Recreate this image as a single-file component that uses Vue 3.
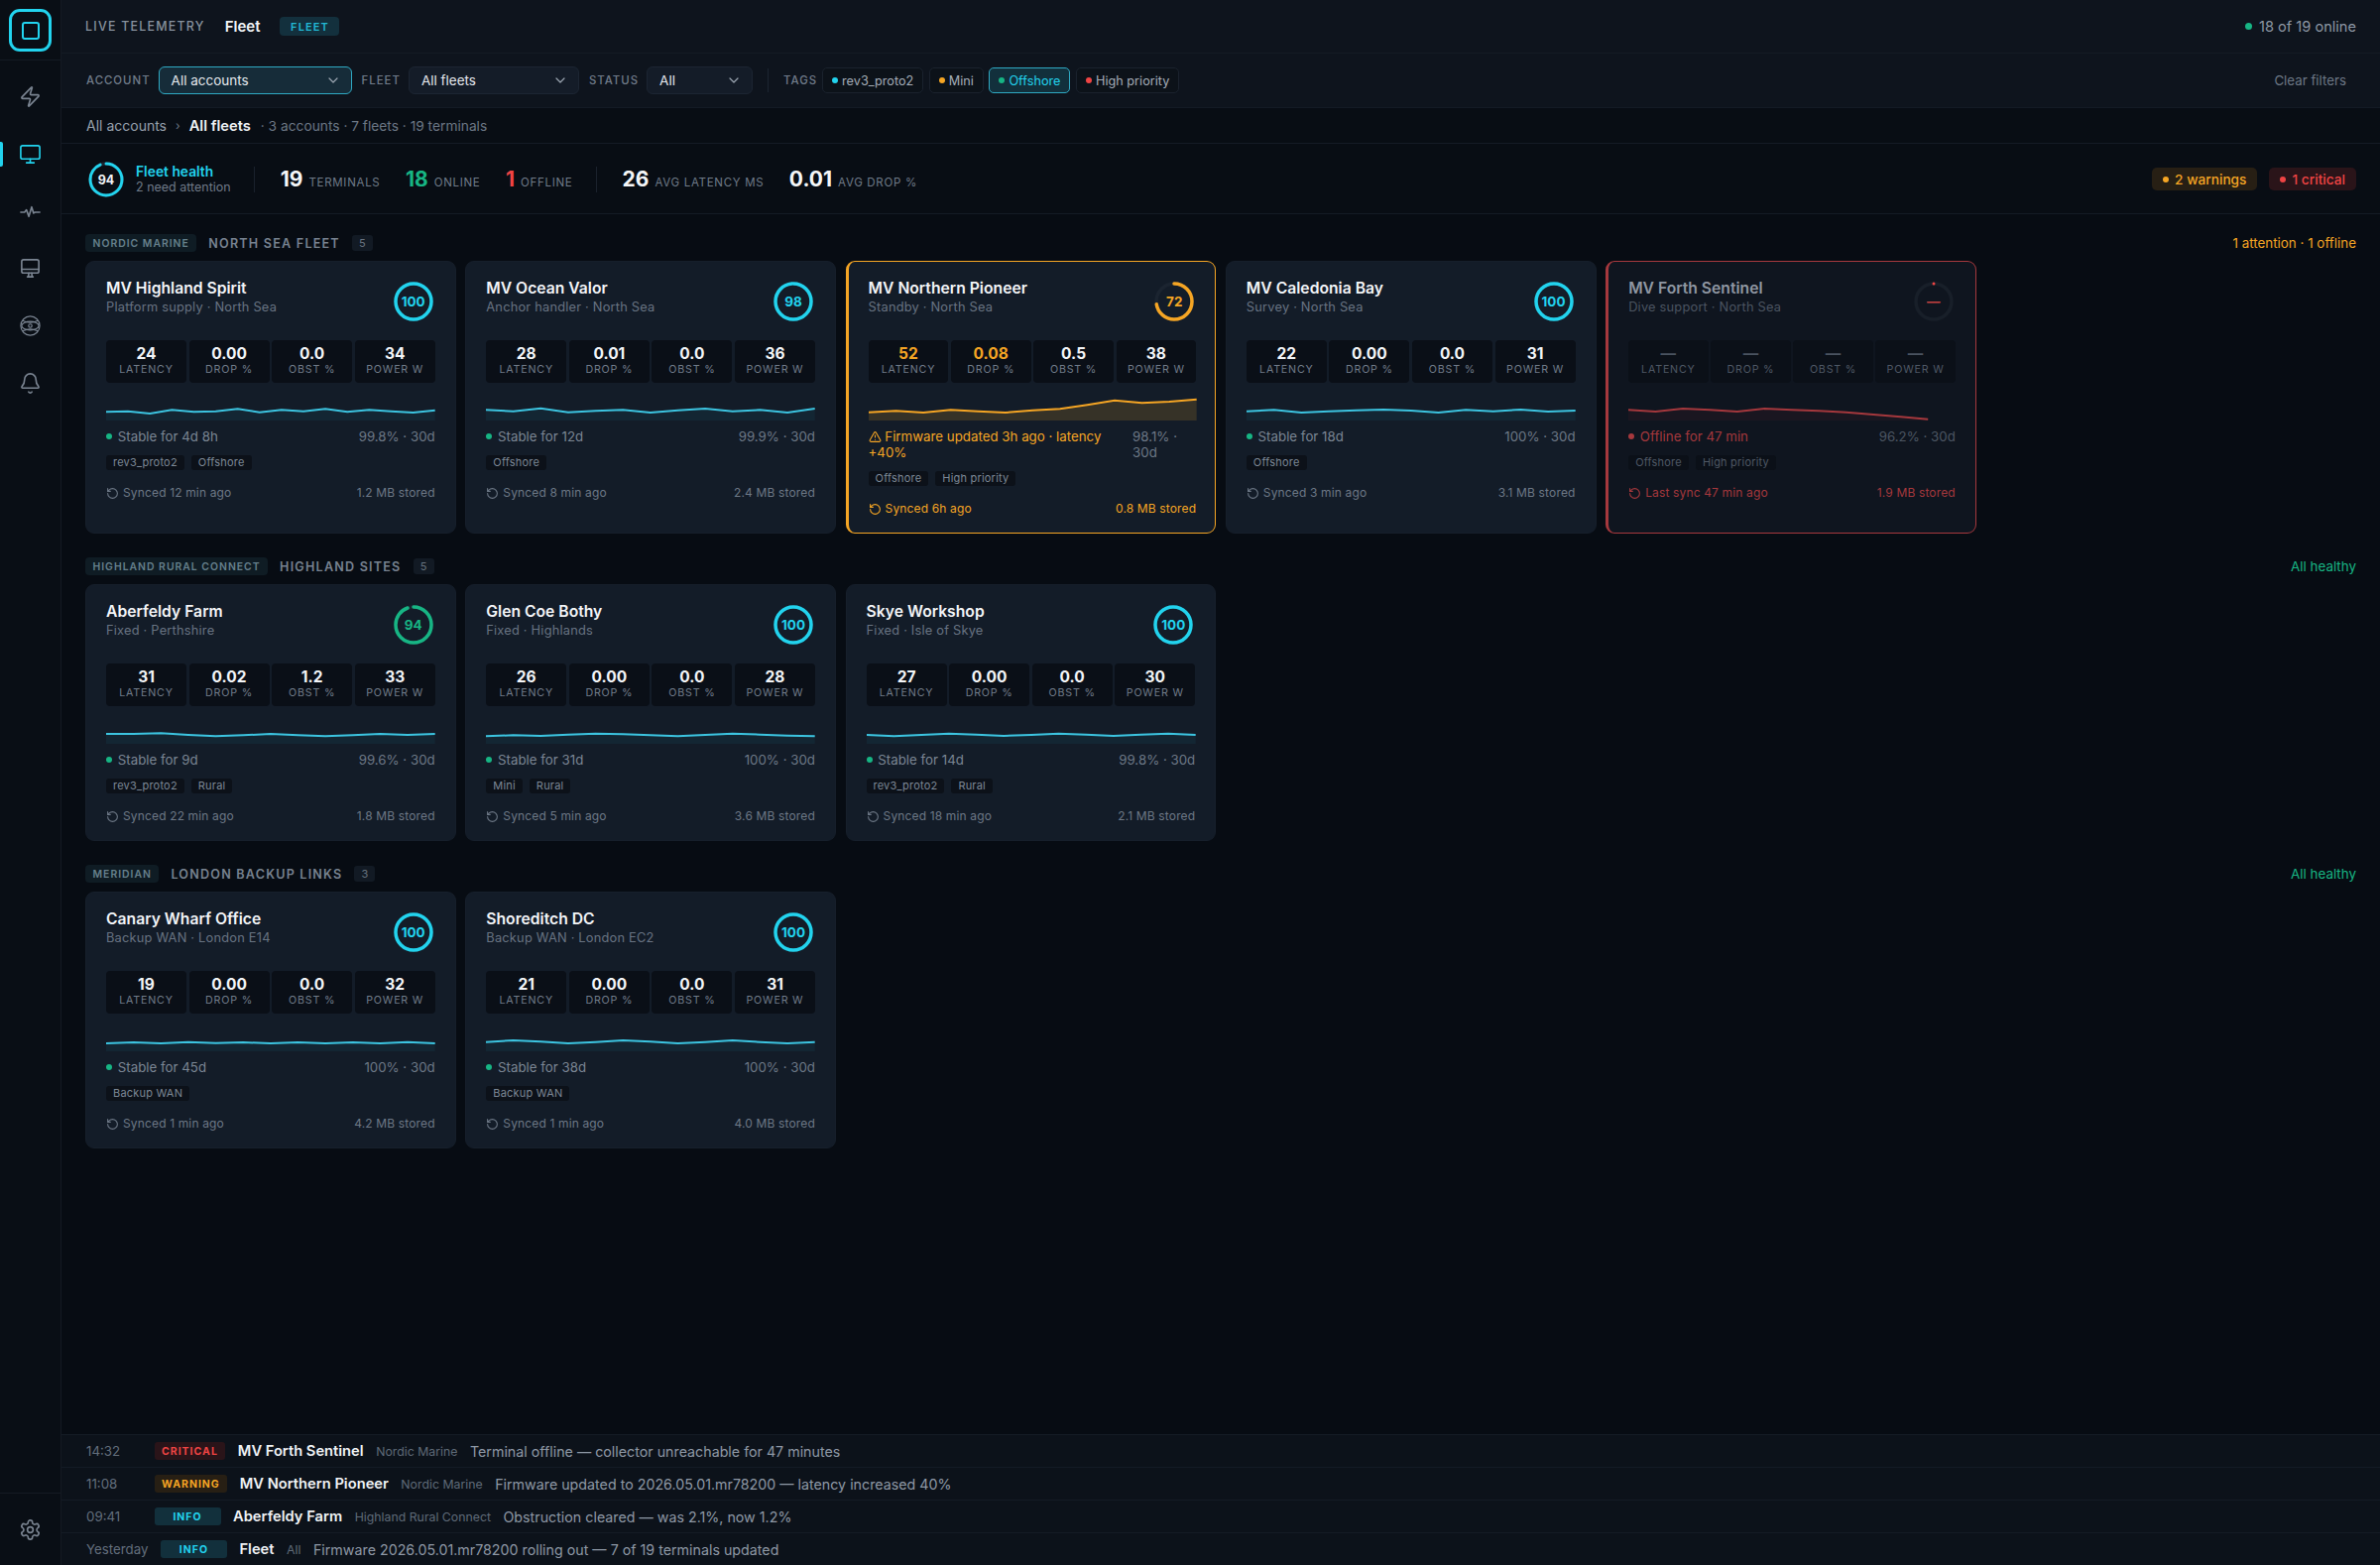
<script setup>
const sections = [
  { org: 'NORDIC MARINE', name: 'NORTH SEA FLEET', count: 5, note: '1 attention · 1 offline', noteCls: 'amber', cards: [
    { t: 'MV Highland Spirit', s: 'Platform supply · North Sea', score: 100, m: ['24', '0.00', '0.0', '34'], st: 'Stable for 4d 8h', up: '99.8% · 30d', tags: ['rev3_proto2', 'Offshore'], sync: 'Synced 12 min ago', mb: '1.2 MB stored', pts: [17.3,16.7,19,15.3,17.3,16.7,14.3,17.7,15.3,16.7,14.3,17.3,15.3,16.7,18,15.7] },
    { t: 'MV Ocean Valor', s: 'Anchor handler · North Sea', score: 98, m: ['28', '0.01', '0.0', '36'], st: 'Stable for 12d', up: '99.9% · 30d', tags: ['Offshore'], sync: 'Synced 8 min ago', mb: '2.4 MB stored', pts: [15.3,16.7,13.7,17.7,16.3,15.3,18,15.7,14,16.7,15.3,18,14] },
    { t: 'MV Northern Pioneer', s: 'Standby · North Sea', score: 72, kind: 'warn', hot: [0, 1], m: ['52', '0.08', '0.5', '38'], st: 'Firmware updated 3h ago · latency +40%', up: '98.1% · 30d', tags: ['Offshore', 'High priority'], sync: 'Synced 6h ago', mb: '0.8 MB stored', pts: [17.7,16.3,18,15.3,16.7,18,15.7,14.3,10.3,5.7,8.3,7,4.7] },
    { t: 'MV Caledonia Bay', s: 'Survey · North Sea', score: 100, m: ['22', '0.00', '0.0', '31'], st: 'Stable for 18d', up: '100% · 30d', tags: ['Offshore'], sync: 'Synced 3 min ago', mb: '3.1 MB stored', pts: [16.7,15.3,18,16.7,15.7,15,16,18,15.3,16.7,15,17,16] },
    { t: 'MV Forth Sentinel', s: 'Dive support · North Sea', score: 0, kind: 'off', m: ['—', '—', '—', '—'], st: 'Offline for 47 min', up: '96.2% · 30d', tags: ['Offshore', 'High priority'], sync: 'Last sync 47 min ago', mb: '1.9 MB stored', pts: [15.3,17,14,15.3,17,14,15.3,16.3,17.7,20,22.3,24.7], partial: 11 / 12 },
  ] },
  { org: 'HIGHLAND RURAL CONNECT', name: 'HIGHLAND SITES', count: 5, note: 'All healthy', noteCls: 'green', cards: [
    { t: 'Aberfeldy Farm', s: 'Fixed · Perthshire', score: 94, ringCls: 'green', m: ['31', '0.02', '1.2', '33'], st: 'Stable for 9d', up: '99.6% · 30d', tags: ['rev3_proto2', 'Rural'], sync: 'Synced 22 min ago', mb: '1.8 MB stored', pts: [16,16,15.3,17,18.3,17.3,16,17.3,18.3,17.3,16,17,16] },
    { t: 'Glen Coe Bothy', s: 'Fixed · Highlands', score: 100, m: ['26', '0.00', '0.0', '28'], st: 'Stable for 31d', up: '100% · 30d', tags: ['Mini', 'Rural'], sync: 'Synced 5 min ago', mb: '3.6 MB stored', pts: [18.3,17.3,18,16.7,15.7,16.3,17.3,18.3,17,15.7,16.7,17.7,18.3] },
    { t: 'Skye Workshop', s: 'Fixed · Isle of Skye', score: 100, m: ['27', '0.00', '0.0', '30'], st: 'Stable for 14d', up: '99.8% · 30d', tags: ['rev3_proto2', 'Rural'], sync: 'Synced 18 min ago', mb: '2.1 MB stored', pts: [17,18.3,17,15.7,16.7,18,17,15.7,16.7,18,16.7,15.7,17] },
  ] },
  { org: 'MERIDIAN', name: 'LONDON BACKUP LINKS', count: 3, note: 'All healthy', noteCls: 'green', cards: [
    { t: 'Canary Wharf Office', s: 'Backup WAN · London E14', score: 100, m: ['19', '0.00', '0.0', '32'], st: 'Stable for 45d', up: '100% · 30d', tags: ['Backup WAN'], sync: 'Synced 1 min ago', mb: '4.2 MB stored', pts: [18,17,18,16.7,17.7,17,18,17,18,17,18,16.7,18] },
    { t: 'Shoreditch DC', s: 'Backup WAN · London EC2', score: 100, m: ['21', '0.00', '0.0', '31'], st: 'Stable for 38d', up: '100% · 30d', tags: ['Backup WAN'], sync: 'Synced 1 min ago', mb: '4.0 MB stored', pts: [16.7,15,16.3,18,16.7,15,16.3,18,16.7,15,16.7,18,16.7] },
  ] },
]
const labels = ['LATENCY', 'DROP %', 'OBST %', 'POWER W']
const chips = [
  { l: 'rev3_proto2', c: 'cyan' }, { l: 'Mini', c: 'amber' }, { l: 'Offshore', c: 'green', on: true }, { l: 'High priority', c: 'red' },
]
const events = [
  { time: '14:32', lvl: 'CRITICAL', cls: 'crit', who: 'MV Forth Sentinel', org: 'Nordic Marine', msg: 'Terminal offline — collector unreachable for 47 minutes' },
  { time: '11:08', lvl: 'WARNING', cls: 'warn', who: 'MV Northern Pioneer', org: 'Nordic Marine', msg: 'Firmware updated to 2026.05.01.mr78200 — latency increased 40%' },
  { time: '09:41', lvl: 'INFO', cls: 'info', who: 'Aberfeldy Farm', org: 'Highland Rural Connect', msg: 'Obstruction cleared — was 2.1%, now 1.2%' },
  { time: 'Yesterday', lvl: 'INFO', cls: 'info', who: 'Fleet', org: 'All', msg: 'Firmware 2026.05.01.mr78200 rolling out — 7 of 19 terminals updated' },
]
const stepX = (c, i) => {
  const n = c.pts.length - 1
  return (i / n) * 100 * (c.partial || 1)
}
const line = (c) => c.pts.map((y, i) => `${stepX(c, i).toFixed(2)},${y}`).join(' ')
const area = (c) => `0,26 ${line(c)} ${(100 * (c.partial || 1)).toFixed(2)},26`
const CIRC = 2 * Math.PI * 18
const dash = (score) => `${(score / 100) * CIRC} ${CIRC}`
const ringClass = (c) => c.kind === 'warn' ? 'amber' : c.kind === 'off' ? 'red' : c.ringCls || 'cyan'
</script>

<template>
  <div class="app">
    <aside class="side">
      <div class="logo-cell"><div class="logo"><i class="logo-in"></i></div></div>
      <nav class="nav">
        <a class="nav-i"><svg viewBox="0 0 24 24"><path d="M4 14a1 1 0 0 1-.78-1.63l9.9-10.2a.5.5 0 0 1 .86.46l-1.92 6.02A1 1 0 0 0 13 10h7a1 1 0 0 1 .78 1.63l-9.9 10.2a.5.5 0 0 1-.86-.46l1.92-6.02A1 1 0 0 0 11 14z"/></svg></a>
        <a class="nav-i on"><svg viewBox="0 0 24 24"><rect x="2" y="3" width="20" height="14" rx="2"/><path d="M8 21h8M12 17v4"/></svg></a>
        <a class="nav-i"><svg viewBox="0 0 24 24"><path d="M2 12.500h4l2-2.500 2.500 7 3-10 2 6.500 1.500-1H22"/></svg></a>
        <a class="nav-i"><svg viewBox="0 0 24 24"><rect x="3" y="3" width="18" height="14" rx="2"/><path d="M3 13h18M9 21h6M10.500 17l-.5 4M13.500 17l.5 4"/></svg></a>
        <a class="nav-i thin"><svg viewBox="0 0 24 24"><circle cx="12" cy="12" r="10"/><ellipse cx="12" cy="12" rx="9" ry="4.500"/><circle cx="12" cy="12" r="1.800"/><path d="M4 6.500c5 2.500 11 2.500 16 0M4 17.500c5-2.500 11-2.500 16 0"/></svg></a>
        <a class="nav-i"><svg viewBox="0 0 24 24"><path d="M10.268 21a2 2 0 0 0 3.464 0"/><path d="M3.262 15.326A1 1 0 0 0 4 17h16a1 1 0 0 0 .74-1.673C19.41 13.956 18 12.499 18 8A6 6 0 0 0 6 8c0 4.499-1.411 5.956-2.738 7.326"/></svg></a>
      </nav>
      <div class="side-foot">
        <svg viewBox="0 0 24 24"><path d="M12.220 2h-.44a2 2 0 0 0-2 2v.18a2 2 0 0 1-1 1.730l-.43.25a2 2 0 0 1-2 0l-.15-.08a2 2 0 0 0-2.730.73l-.22.38a2 2 0 0 0 .73 2.730l.15.1a2 2 0 0 1 1 1.720v.51a2 2 0 0 1-1 1.740l-.15.09a2 2 0 0 0-.73 2.730l.22.38a2 2 0 0 0 2.730.73l.15-.08a2 2 0 0 1 2 0l.43.25a2 2 0 0 1 1 1.730V20a2 2 0 0 0 2 2h.44a2 2 0 0 0 2-2v-.18a2 2 0 0 1 1-1.730l.43-.25a2 2 0 0 1 2 0l.15.08a2 2 0 0 0 2.730-.73l.22-.39a2 2 0 0 0-.73-2.730l-.15-.08a2 2 0 0 1-1-1.740v-.5a2 2 0 0 1 1-1.740l.15-.09a2 2 0 0 0 .73-2.730l-.22-.38a2 2 0 0 0-2.730-.73l-.15.08a2 2 0 0 1-2 0l-.43-.25a2 2 0 0 1-1-1.730V4a2 2 0 0 0-2-2z"/><circle cx="12" cy="12" r="3"/></svg>
      </div>
    </aside>

    <main class="main">
      <header class="top">
        <span class="eyebrow">LIVE TELEMETRY</span>
        <span class="top-title">Fleet</span>
        <span class="top-badge">FLEET</span>
        <span class="online"><i class="dot green-bg big"></i>18 of 19 online</span>
      </header>

      <div class="filters">
        <span class="f-label">ACCOUNT</span>
        <div class="sel on w-account"><span>All accounts</span><svg viewBox="0 0 24 24"><path d="m6 9 6 6 6-6"/></svg></div>
        <span class="f-label">FLEET</span>
        <div class="sel w-fleet"><span>All fleets</span><svg viewBox="0 0 24 24"><path d="m6 9 6 6 6-6"/></svg></div>
        <span class="f-label">STATUS</span>
        <div class="sel w-status"><span>All</span><svg viewBox="0 0 24 24"><path d="m6 9 6 6 6-6"/></svg></div>
        <i class="f-div"></i>
        <span class="f-label tags-label">TAGS</span>
        <span v-for="c in chips" :key="c.l" class="chip" :class="{ on: c.on }"><i class="dot" :class="c.c + '-bg'"></i>{{ c.l }}</span>
        <span class="clear">Clear filters</span>
      </div>

      <div class="crumbs">
        <span class="c-a">All accounts</span><span class="c-sep">›</span><span class="c-b">All fleets</span><span class="c-c">· 3 accounts · 7 fleets · 19 terminals</span>
      </div>

      <div class="stats">
        <svg class="health" viewBox="0 0 36 36"><circle cx="18" cy="18" r="16" class="rg-track"/><circle cx="18" cy="18" r="16" class="h-arc" pathLength="100" stroke-dasharray="94 100" transform="rotate(-90 18 18)"/><text x="18" y="22.500" text-anchor="middle">94</text></svg>
        <div class="h-text"><b>Fleet health</b><span>2 need attention</span></div>
        <i class="s-div"></i>
        <span class="kpi"><b>19</b><em>TERMINALS</em></span>
        <span class="kpi"><b class="green">18</b><em>ONLINE</em></span>
        <span class="kpi"><b class="red">1</b><em>OFFLINE</em></span>
        <i class="s-div"></i>
        <span class="kpi"><b>26</b><em>AVG LATENCY MS</em></span>
        <span class="kpi"><b>0.01</b><em>AVG DROP %</em></span>
        <span class="alert a-warn"><i class="dot amber-bg"></i>2 warnings</span>
        <span class="alert a-crit"><i class="dot red-bg"></i>1 critical</span>
      </div>

      <div class="content">
        <section v-for="sec in sections" :key="sec.name" class="section">
          <div class="sec-head">
            <span class="org">{{ sec.org }}</span>
            <span class="sec-name">{{ sec.name }}</span>
            <span class="sec-count">{{ sec.count }}</span>
            <span class="sec-note" :class="sec.noteCls">{{ sec.note }}</span>
          </div>
          <div class="grid">
            <article v-for="c in sec.cards" :key="c.t" class="card" :class="c.kind">
              <div class="head">
                <div class="head-t">
                  <div class="title">{{ c.t }}</div>
                  <div class="sub">{{ c.s }}</div>
                </div>
                <div class="ring" :class="ringClass(c)">
                  <svg viewBox="0 0 40 40">
                    <circle cx="20" cy="20" r="18" class="rg-track"/>
                    <circle v-if="c.kind !== 'off'" cx="20" cy="20" r="18" class="rg-arc" :stroke-dasharray="dash(c.score)" transform="rotate(-90 20 20)"/>
                    <circle v-else cx="20" cy="2" r="1.500" class="rg-dot"/>
                  </svg>
                  <span>{{ c.kind === 'off' ? '—' : c.score }}</span>
                </div>
              </div>
              <div class="tiles">
                <div v-for="(v, i) in c.m" :key="i" class="tile">
                  <b :class="{ hot: c.hot && c.hot.includes(i) }">{{ v }}</b>
                  <span>{{ labels[i] }}</span>
                </div>
              </div>
              <svg class="spark" :class="ringClass(c)" viewBox="0 0 100 26" preserveAspectRatio="none">
                <polygon :points="area(c)" class="sp-fill"/>
                <polyline :points="line(c)" class="sp-line"/>
              </svg>
              <div class="status">
                <span class="st-l">
                  <svg v-if="c.kind === 'warn'" class="ic" viewBox="0 0 24 24"><path d="m21.730 18-8-14a2 2 0 0 0-3.480 0l-8 14A2 2 0 0 0 4 21h16a2 2 0 0 0 1.730-3"/><path d="M12 9v4M12 17h.01"/></svg>
                  <i v-else class="dot" :class="c.kind === 'off' ? 'red-bg' : 'green-bg'"></i>
                  {{ c.st }}
                </span>
                <span class="st-r">{{ c.up }}</span>
              </div>
              <div class="tags"><span v-for="t in c.tags" :key="t" class="tag">{{ t }}</span></div>
              <div class="foot">
                <span class="sync"><svg class="ic" viewBox="0 0 24 24"><path d="M3 12a9 9 0 1 0 9-9 9.750 9.750 0 0 0-6.740 2.740L3 8"/><path d="M3 3v5h5"/></svg>{{ c.sync }}</span>
                <span>{{ c.mb }}</span>
              </div>
            </article>
          </div>
        </section>
      </div>

      <div class="ticker">
        <div v-for="e in events" :key="e.time" class="ev">
          <span class="ev-time">{{ e.time }}</span>
          <span class="ev-lvl" :class="e.cls">{{ e.lvl }}</span>
          <span class="ev-who">{{ e.who }}</span>
          <span class="ev-org">{{ e.org }}</span>
          <span class="ev-msg">{{ e.msg }}</span>
        </div>
      </div>
    </main>
  </div>
</template>

<style scoped>
.app { display: flex; height: 1578px; overflow: hidden; background: #070c13; font-family: Inter, "Noto Sans", sans-serif; color: #e6eaef; }
.side { width: 62px; flex: none; display: flex; flex-direction: column; background: #090e15; border-right: 1px solid #141a23; box-sizing: border-box; }
.logo-cell { height: 61px; flex: none; display: flex; align-items: center; justify-content: center; border-bottom: 1px solid #141a23; box-sizing: border-box; }
.logo { width: 43px; height: 43px; box-sizing: border-box; border: 3px solid #22d3ee; border-radius: 11px; display: flex; align-items: center; justify-content: center; margin-top: 1px; }
.logo-in { width: 18px; height: 18px; box-sizing: border-box; border: 2px solid #22d3ee; border-radius: 3px; }
.nav { flex: 1; display: flex; flex-direction: column; padding-top: 8px; }
.nav-i { height: 57.700px; flex: none; display: flex; align-items: center; justify-content: center; position: relative; color: #7a8491; }
.nav-i svg, .side-foot svg { width: 23px; height: 23px; fill: none; stroke: currentColor; stroke-width: 1.700; stroke-linecap: round; stroke-linejoin: round; }
.nav-i.thin svg { stroke-width: 1.200; }
.nav-i.on { color: #22d3ee; }
.nav-i.on::before { content: ""; position: absolute; left: 0; top: 16px; width: 3px; height: 25px; background: #22d3ee; border-radius: 0 2px 2px 0; }
.side-foot { height: 73px; flex: none; display: flex; align-items: center; justify-content: center; border-top: 1px solid #141a23; box-sizing: border-box; color: #7a8491; }

.main { flex: 1; min-width: 0; display: flex; flex-direction: column; }
.top { height: 54px; flex: none; box-sizing: border-box; padding: 0 24px; display: flex; align-items: center; background: #0e141d; border-bottom: 1px solid #141b25; }
.eyebrow { font-size: 12.400px; letter-spacing: 1.250px; font-weight: 500; color: #87919e; }
.top-title { font-size: 15px; font-weight: 600; color: #f2f5f8; margin-left: 20px; }
.top-badge { margin-left: 20px; height: 19px; width: 60px; display: flex; align-items: center; justify-content: center; font-size: 11px; font-weight: 600; letter-spacing: 1.100px; color: #22b8d4; background: #13303d; border-radius: 4px; }
.online { margin-left: auto; font-size: 14.600px; color: #8d97a4; display: flex; align-items: center; gap: 7px; }
.dot { width: 6px; height: 6px; border-radius: 50%; display: inline-block; flex: none; }
.dot.big { width: 7px; height: 7px; }
.green-bg { background: #17b584; } .amber-bg { background: #f5a524; } .red-bg { background: #ef4444; } .cyan-bg { background: #22d3ee; }
.green { color: #17b584; } .amber { color: #f5a524; } .red { color: #ef4444; }

.filters { height: 55px; flex: none; box-sizing: border-box; padding: 0 24px 0 25px; display: flex; align-items: center; background: #0e141d; border-bottom: 1px solid #141b25; }
.f-label { font-size: 11.400px; letter-spacing: 1px; font-weight: 500; color: #707b89; margin-right: 8px; }
.f-label.tags-label { margin-right: 5px; }
.sel { height: 28px; box-sizing: border-box; display: flex; align-items: center; justify-content: space-between; padding: 0 10px 0 12px; background: #141c28; border: 1px solid #1c2532; border-radius: 6px; font-size: 13.500px; color: #e4e8ed; margin-right: 10px; }
.sel svg { width: 16px; height: 16px; fill: none; stroke: #9aa4b0; stroke-width: 1.800; stroke-linecap: round; stroke-linejoin: round; }
.sel.on { background: #162c39; border-color: #2fa8c2; }
.w-account { width: 195px; } .w-fleet { width: 172px; } .w-status { width: 107px; margin-right: 15px; }
.f-div { width: 1px; height: 24px; background: #1c2532; margin-right: 15px; }
.chip { height: 26px; box-sizing: border-box; display: inline-flex; align-items: center; gap: 4px; padding: 0 9px; border: 1px solid #1a222d; border-radius: 5px; font-size: 12.700px; color: #a4adb8; background: #0c1219; margin-right: 5.500px; }
.chip.on { color: #22d3ee; background: #12303c; border-color: #2fa8c2; }
.clear { margin-left: auto; margin-right: 10px; font-size: 13.300px; color: #6c7785; }

.crumbs { height: 36px; flex: none; box-sizing: border-box; padding-left: 25px; display: flex; align-items: center; font-size: 14px; background: #080d14; border-bottom: 1px solid #141b25; }
.c-a { color: #97a1ad; } .c-sep { color: #6c7785; margin: 0 9px; font-size: 12px; } .c-b { font-weight: 600; font-size: 14.700px; color: #f0f3f6; }
.c-c { color: #6c7785; margin-left: 10px; font-size: 13.750px; }

.stats { height: 71px; flex: none; box-sizing: border-box; padding: 1px 24px 0 27px; display: flex; align-items: center; background: #080d14; border-bottom: 1px solid #141b25; }
.health { width: 36px; height: 36px; flex: none; }
.health text { font: 700 12.500px Inter, sans-serif; fill: #f0f3f6; }
.h-arc { fill: none; stroke: #22d3ee; stroke-width: 3; stroke-linecap: round; }
.h-text { display: flex; flex-direction: column; margin-left: 12px; line-height: 15px; }
.h-text b { font-size: 13.800px; font-weight: 600; color: #22d3ee; }
.h-text span { font-size: 12.500px; color: #6f7a88; }
.s-div { width: 1px; height: 26px; background: #1a212c; margin: 0 26px 0 23px; }
.kpi { display: flex; align-items: baseline; gap: 6px; margin-right: 25.500px; }
.kpi b { font-size: 21px; font-weight: 700; color: #f4f6f8; }
.kpi b.green { color: #17b584; } .kpi b.red { color: #ef4444; }
.kpi em { font-style: normal; font-size: 11.500px; letter-spacing: .7px; color: #6f7a88; }
.kpi:has(+ .s-div) { margin-right: 0; }
.alert { height: 23px; display: inline-flex; align-items: center; gap: 6px; padding: 0 11px; border-radius: 5px; font-size: 13.700px; font-weight: 500; }
.a-warn { margin-left: auto; color: #f5a524; background: #271f14; margin-right: 12px; }
.a-crit { color: #ef4444; background: #2a1419; }

.content { flex: 1; min-height: 0; box-sizing: border-box; padding: 20px 24px 0; display: flex; flex-direction: column; gap: 24px; }
.sec-head { height: 18px; display: flex; align-items: center; margin-bottom: 9px; }
.org { height: 18px; display: inline-flex; align-items: center; padding: 0 7.500px; background: #0f1c24; border-radius: 4px; font-size: 10.400px; font-weight: 600; letter-spacing: 1px; color: #66808c; }
.sec-name { margin-left: 12px; font-size: 12.600px; font-weight: 600; letter-spacing: 1.200px; color: #778290; }
.sec-count { margin-left: 12px; height: 16px; min-width: 21px; display: inline-flex; align-items: center; justify-content: center; background: #121a24; border-radius: 3px; font-size: 11px; color: #67727f; }
.sec-note { margin-left: auto; font-size: 13.400px; }
.grid { display: grid; grid-template-columns: repeat(5, 373.700px); gap: 9.600px; }
.card { box-sizing: border-box; background: #131c28; border: 1px solid #161f2b; border-radius: 9px; padding: 18px 20px 15px; display: flex; flex-direction: column; min-width: 0; }
.head { display: flex; justify-content: space-between; align-items: flex-start; height: 42px; }
.title { font-size: 15.700px; line-height: 18px; font-weight: 600; color: #f3f5f8; }
.sub { font-size: 12.850px; line-height: 16px; margin-top: 2px; color: #687382; letter-spacing: .2px; }
.ring { position: relative; width: 40px; height: 40px; margin: 2px 2px 0 0; flex: none; display: flex; align-items: center; justify-content: center; font-size: 13.500px; font-weight: 700; }
.ring svg { position: absolute; inset: 0; width: 100%; height: 100%; }
.rg-track { fill: none; stroke: #1b2430; stroke-width: 3.500; }
.rg-arc { fill: none; stroke: currentColor; stroke-width: 3.500; stroke-linecap: round; }
.rg-dot { fill: currentColor; stroke: none; }
.ring.cyan { color: #22d3ee; } .ring.green { color: #17b584; } .ring.amber { color: #f5a524; } .ring.red { color: #ef4444; }
.tiles { display: grid; grid-template-columns: repeat(4, 1fr); gap: 2.600px; margin-top: 19px; }
.tile { height: 42.500px; box-sizing: border-box; background: #0a0f17; border-radius: 4px; display: flex; flex-direction: column; align-items: center; padding-top: 5px; }
.tile b { font-size: 15.500px; line-height: 18px; font-weight: 700; color: #f3f5f8; }
.tile b.hot { color: #f5a524; }
.tile span { font-size: 10.700px; line-height: 14px; letter-spacing: .8px; color: #717c8a; }
.spark { display: block; width: 100%; height: 26px; margin-top: 12.500px; overflow: visible; }
.sp-line { fill: none; stroke-width: 2; vector-effect: non-scaling-stroke; stroke: #3cc4e0; }
.sp-fill { fill: rgba(34, 211, 238, .06); stroke: none; }
.spark.green .sp-line { stroke: #3cc4e0; }
.spark.amber .sp-line { stroke: #f5a524; } .spark.amber .sp-fill { fill: rgba(245, 165, 36, .16); }
.spark.red .sp-line { stroke: #a5383d; } .spark.red .sp-fill { fill: rgba(239, 68, 68, .05); }
.status { display: flex; justify-content: space-between; gap: 24px; margin-top: 7.500px; font-size: 13.300px; line-height: 16px; color: #7b8694; }
.st-l { display: block; }
.st-l .dot { margin-right: 2px; vertical-align: 1.500px; }
.st-r { color: #6d7886; }
.ic { width: 13px; height: 13px; fill: none; stroke: currentColor; stroke-width: 2; stroke-linecap: round; stroke-linejoin: round; vertical-align: -2px; flex: none; }
.tags { display: flex; gap: 7px; margin-top: 11px; }
.tag { height: 15px; display: inline-flex; align-items: center; padding: 0 7px; background: #0c1119; border-radius: 3px; font-size: 11px; letter-spacing: .2px; color: #7d8896; }
.foot { display: flex; justify-content: space-between; align-items: center; margin-top: 15.500px; padding-bottom: 1px; font-size: 12px; line-height: 16px; color: #6d7886; letter-spacing: .15px; }
.sync { display: inline-flex; align-items: center; gap: 4px; }
.card.warn { border: 1.500px solid #f5a524; border-left-width: 3.500px; padding-left: 20px; padding-right: 19px; }
.card.warn .st-l, .card.warn .foot { color: #f5a524; }
.card.off { background: #0f151f; border: 1.500px solid #a5383d; border-left-width: 3.500px; padding-left: 20px; padding-right: 20px; }
.card.off .title { color: #8f97a2; }
.card.off .sub { color: #4b5461; }
.card.off .tile { background: #0b1018; }
.card.off .tile b { color: #4a5360; }
.card.off .tile span { color: #4f5865; }
.card.off .st-l, .card.off .foot { color: #a5383d; }
.card.off .st-r { color: #4c5562; }
.card.off .dot { background: #a5383d; }
.card.off .tag { background: #0b1018; color: #4f5865; }
.card.off .ring.red span { color: #c2403f; }
.card.off .rg-track { stroke: #181f29; }

.ticker { flex: none; background: #0c121a; }
.ev { height: 33px; box-sizing: border-box; padding-left: 25px; border-top: 1px solid #141b25; display: flex; align-items: center; gap: 12.500px; font-size: 13px; white-space: nowrap; }
.ev-time { min-width: 56px; font-size: 13.300px; color: #636e7c; }
.ev-lvl { height: 18px; min-width: 67px; box-sizing: border-box; display: inline-flex; align-items: center; justify-content: center; padding: 0 7.500px; border-radius: 3px; font-size: 10.500px; font-weight: 700; letter-spacing: 1px; }
.ev-lvl.crit { color: #ef4444; background: #2a1419; }
.ev-lvl.warn { color: #f5a524; background: #271f14; }
.ev-lvl.info { color: #22d3ee; background: #12303c; }
.ev-who { font-weight: 600; font-size: 14.700px; color: #f0f3f6; }
.ev-org { font-size: 12.300px; color: #5f6a78; }
.ev-msg { font-size: 14.250px; color: #8e98a5; }
</style>

<style>
html, body { margin: 0; background: #070c13; }
</style>
